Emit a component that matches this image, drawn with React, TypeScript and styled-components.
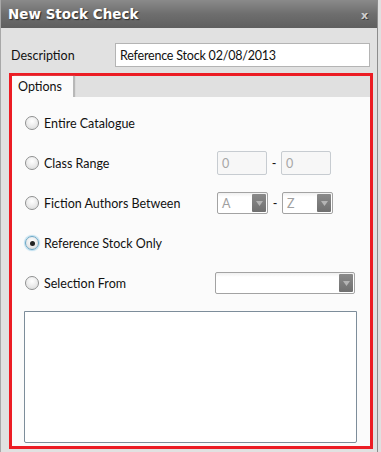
import React from "react";
import styled, { createGlobalStyle } from "styled-components";

const Global = createGlobalStyle`
  html, body { margin: 0; padding: 0; background: #e0e0e0; overflow: hidden; }
  * { box-sizing: border-box; }
`;

const Window = styled.div`
  width: 378px;
  height: 452px;
  background: #e1e1e1;
  border-left: 1px solid #a8a8a8;
  border-right: 1px solid #8c8c8c;
  display: flex;
  flex-direction: column;
  font-family: Lato, "Noto Sans", sans-serif;
  font-size: 12.5px;
  color: #111;
`;

const TitleBar = styled.div`
  height: 28px;
  flex: none;
  background: linear-gradient(#8a8a8a, #6e6e6e 50%, #5f5f5f);
  display: flex;
  align-items: center;
  justify-content: space-between;
  padding: 0 9px 0 7px;
`;

const Title = styled.div`
  font-family: "DejaVu Sans", Verdana, sans-serif;
  font-weight: bold;
  font-size: 13.5px;
  color: #fff;
  text-shadow: 1px 1px 1px #2a2a2a;
`;

const Close = styled.div`
  font-family: "DejaVu Sans", sans-serif;
  font-weight: bold;
  font-size: 11px;
  color: #cfcfcf;
  text-shadow: 1px 1px 0 #3a3a3a;
  margin-top: 2px;
`;

const Body = styled.div`
  flex: 1;
  display: flex;
  flex-direction: column;
  padding: 15px 4px 0 8px;
`;

const DescRow = styled.div`
  display: flex;
  align-items: center;
  height: 24px;
`;

const DescLabel = styled.div`
  width: 106px;
  padding-left: 2px;
`;

const DescInput = styled.div`
  width: 255px;
  height: 24px;
  border: 1px solid #b4b4b4;
  background: #fff;
  padding-left: 4px;
  display: flex;
  align-items: center;
  letter-spacing: -0.2px;
`;

const TabBox = styled.div`
  margin-top: 6px;
  width: 364px;
  height: 376px;
  border: 3px solid #ec1c24;
  display: flex;
  flex-direction: column;
  background: #e0e0e0;
`;

const TabStrip = styled.div`
  height: 21px;
  flex: none;
  display: flex;
  background: #e0e0e0;
`;

const Tab = styled.div`
  width: 61px;
  background: #fbfbfb;
  padding-left: 6px;
  display: flex;
  align-items: center;
  box-shadow: 2px 0 1px #b8b8b8;
`;

const Panel = styled.div`
  flex: 1;
  background: #fbfbfb;
  display: flex;
  flex-direction: column;
  padding: 6px 0 0 13px;
`;

const Row = styled.div`
  height: 40px;
  display: grid;
  grid-template-columns: 192px auto;
  align-items: center;
`;

const RadioLabel = styled.div`
  display: flex;
  align-items: center;
  gap: 5px;
`;

const Radio = styled.div<{ $checked?: boolean }>`
  width: 14px;
  height: 14px;
  border-radius: 50%;
  border: 1px solid ${(p) => (p.$checked ? "#6aa6c4" : "#8e8f8f")};
  background: radial-gradient(circle at 50% 35%, #ffffff 0%, #eaeaea 55%, #cfd0d0 100%);
  box-shadow: ${(p) => (p.$checked ? "0 0 1px 1px #b9dcee" : "inset 0 0 1px #fff")};
  display: flex;
  align-items: center;
  justify-content: center;
  &::after {
    content: "";
    display: ${(p) => (p.$checked ? "block" : "none")};
    width: 5px;
    height: 5px;
    border-radius: 50%;
    background: #222;
  }
`;

const Controls = styled.div<{ $shift?: number }>`
  display: flex;
  align-items: center;
  margin-left: ${(p) => p.$shift ?? 0}px;
`;

const Dash = styled.div`
  width: 14px;
  text-align: center;
`;

const NumBox = styled.div`
  width: 50px;
  height: 24px;
  border: 1px solid #c7ccd1;
  border-radius: 2px;
  background: #f7f7f7;
  color: #a6a6a6;
  padding-left: 4px;
  display: flex;
  align-items: center;
`;

const Combo = styled.div<{ $w: number }>`
  width: ${(p) => p.$w}px;
  height: 22px;
  border: 1px solid #a3a3a3;
  border-radius: 2px;
  background: linear-gradient(#f0f0f0, #ffffff 4px);
  color: #a0a0a0;
  padding: 1px 1px 1px 4px;
  display: flex;
  align-items: stretch;
`;

const ComboText = styled.div`
  flex: 1;
  display: flex;
  align-items: center;
`;

const ComboButton = styled.div`
  width: 14px;
  background: linear-gradient(#8a8a8a, #6f6f6f);
  border-radius: 1px;
  display: flex;
  align-items: center;
  justify-content: center;
`;

const TextArea = styled.div`
  margin: 8px 0 0 -1px;
  width: 333px;
  height: 132px;
  background: #fff;
  border: 1px solid #7d8d9a;
  border-radius: 0 0 2px 2px;
`;

const Arrow = () => (
  <svg width="7" height="5" viewBox="0 0 7 5">
    <path d="M0 0 H7 L3.5 5 Z" fill="#b4b4b4" />
  </svg>
);

const Dropdown = ({ w, value }: { w: number; value?: string }) => (
  <Combo $w={w}>
    <ComboText>{value}</ComboText>
    <ComboButton>
      <Arrow />
    </ComboButton>
  </Combo>
);

export default function App() {
  return (
    <>
      <Global />
      <Window>
        <TitleBar>
          <Title>New Stock Check</Title>
          <Close>x</Close>
        </TitleBar>
        <Body>
          <DescRow>
            <DescLabel>Description</DescLabel>
            <DescInput>Reference Stock 02/08/2013</DescInput>
          </DescRow>
          <TabBox>
            <TabStrip>
              <Tab>Options</Tab>
            </TabStrip>
            <Panel>
              <Row>
                <RadioLabel>
                  <Radio />
                  Entire Catalogue
                </RadioLabel>
              </Row>
              <Row>
                <RadioLabel>
                  <Radio />
                  Class Range
                </RadioLabel>
                <Controls>
                  <NumBox>0</NumBox>
                  <Dash>-</Dash>
                  <NumBox>0</NumBox>
                </Controls>
              </Row>
              <Row>
                <RadioLabel>
                  <Radio />
                  Fiction Authors Between
                </RadioLabel>
                <Controls>
                  <Dropdown w={51} value="A" />
                  <Dash>-</Dash>
                  <Dropdown w={51} value="Z" />
                </Controls>
              </Row>
              <Row>
                <RadioLabel>
                  <Radio $checked />
                  Reference Stock Only
                </RadioLabel>
              </Row>
              <Row>
                <RadioLabel>
                  <Radio />
                  Selection From
                </RadioLabel>
                <Controls $shift={-2}>
                  <Dropdown w={140} />
                </Controls>
              </Row>
              <TextArea />
            </Panel>
          </TabBox>
        </Body>
      </Window>
    </>
  );
}
